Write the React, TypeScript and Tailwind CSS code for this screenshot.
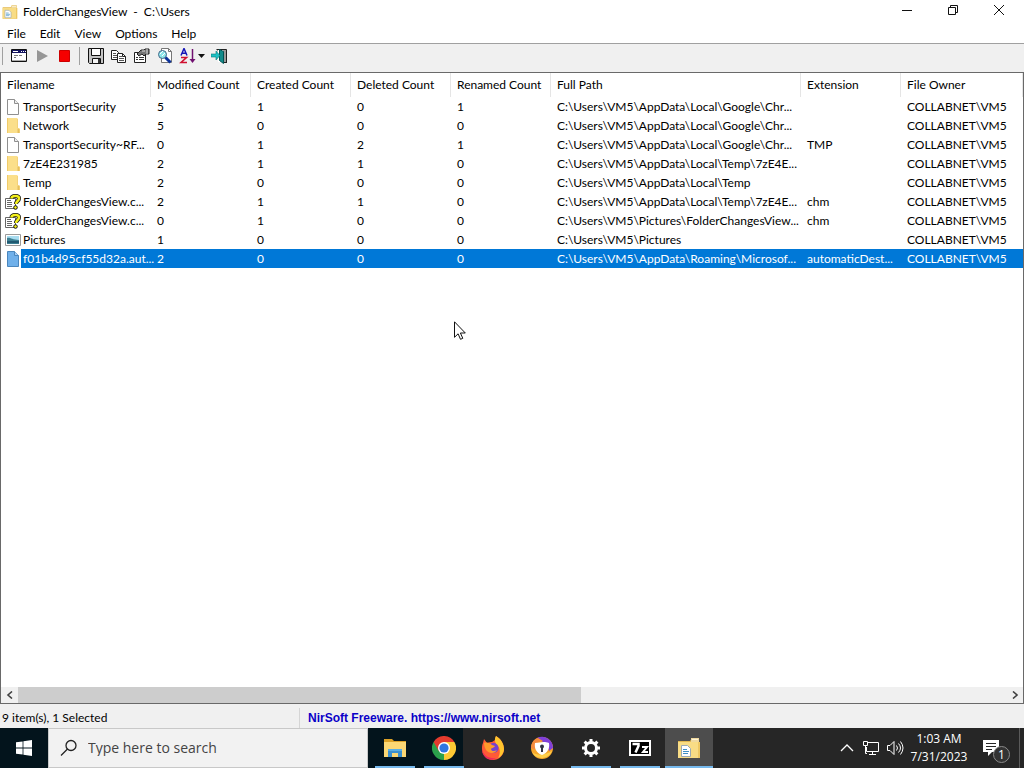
import type { ReactNode } from 'react'
import { clsx } from 'clsx'

type FileKind = 'file' | 'folder' | 'help' | 'picture' | 'selected'

const columns = [
  { label: 'Filename', width: 'w-[150px]' },
  { label: 'Modified Count', width: 'w-[100px]' },
  { label: 'Created Count', width: 'w-[100px]' },
  { label: 'Deleted Count', width: 'w-[100px]' },
  { label: 'Renamed Count', width: 'w-[100px]' },
  { label: 'Full Path', width: 'w-[250px]' },
  { label: 'Extension', width: 'w-[100px]' },
  { label: 'File Owner', width: 'w-auto' },
]

const rows: { kind: FileKind; name: string; counts: number[]; path: string; ext: string }[] = [
  { kind: 'file', name: 'TransportSecurity', counts: [5, 1, 0, 1], path: 'C:\\Users\\VM5\\AppData\\Local\\Google\\Chr...', ext: '' },
  { kind: 'folder', name: 'Network', counts: [5, 0, 0, 0], path: 'C:\\Users\\VM5\\AppData\\Local\\Google\\Chr...', ext: '' },
  { kind: 'file', name: 'TransportSecurity~RF...', counts: [0, 1, 2, 1], path: 'C:\\Users\\VM5\\AppData\\Local\\Google\\Chr...', ext: 'TMP' },
  { kind: 'folder', name: '7zE4E231985', counts: [2, 1, 1, 0], path: 'C:\\Users\\VM5\\AppData\\Local\\Temp\\7zE4E...', ext: '' },
  { kind: 'folder', name: 'Temp', counts: [2, 0, 0, 0], path: 'C:\\Users\\VM5\\AppData\\Local\\Temp', ext: '' },
  { kind: 'help', name: 'FolderChangesView.c...', counts: [2, 1, 1, 0], path: 'C:\\Users\\VM5\\AppData\\Local\\Temp\\7zE4E...', ext: 'chm' },
  { kind: 'help', name: 'FolderChangesView.c...', counts: [0, 1, 0, 0], path: 'C:\\Users\\VM5\\Pictures\\FolderChangesView...', ext: 'chm' },
  { kind: 'picture', name: 'Pictures', counts: [1, 0, 0, 0], path: 'C:\\Users\\VM5\\Pictures', ext: '' },
  { kind: 'selected', name: 'f01b4d95cf55d32a.aut...', counts: [2, 0, 0, 0], path: 'C:\\Users\\VM5\\AppData\\Roaming\\Microsof...', ext: 'automaticDest...' },
]

function AppIcon({ className }: { className: string }) {
  return (
    <svg viewBox="0 0 24 24" className={className}>
      <path d="M1 5h12l2-3h7v20H1z" fill="#e3b94f" />
      <path d="M1 6h21v16H1z" fill="#f8dc85" />
      <path d="M14 2h8v4h-8z" fill="#efd9a0" />
      <path d="M15 3h6v1h-6z" fill="#fff6d8" />
      <path d="M21 6h2v16h-2z" fill="#edc763" />
      <path d="M4.500 9.500h6l3 3v8h-9z" fill="#fff" stroke="#9aa9b5" />
      <path d="M6 13.500h4M6 15.500h6M6 17.500h5" stroke="#3f8fc4" />
    </svg>
  )
}

function FileIcon({ kind }: { kind: FileKind }) {
  if (kind === 'folder') {
    return (
      <svg viewBox="0 0 16 16" className="size-4 shrink-0">
        <path d="M2 0h10l1 1v9l2 1v4H2z" fill="#fbdf8a" />
        <path d="M2 0h1v15H2z" fill="#f0cb6a" />
        <path d="M12.500 10.500h2V15h-2z" fill="#e6bf5e" />
        <path d="M12 1h1v9h-1z" fill="#f3d27a" />
      </svg>
    )
  }
  if (kind === 'help') {
    return (
      <svg viewBox="0 0 16 16" className="size-4 shrink-0">
        <path d="M.5 4.500h10v10H.5z" fill="#fff" stroke="#666" />
        <path d="M2 6.500h4M2 8.500h5M2 10.500h5M2 12.500h5" stroke="#666" />
        <path d="M6.500 4.500C6.500 2.500 8 2 10.500 2S14 3 14 4.500C14 7 11 7 11 10" fill="none" stroke="#111" strokeWidth="4" />
        <circle cx="10.500" cy="13.500" r="1.800" fill="#f4f01c" stroke="#111" />
        <path d="M6.500 4.500C6.500 2.500 8 2 10.500 2S14 3 14 4.500C14 7 11 7 11 10" fill="none" stroke="#f4f01c" strokeWidth="2.500" />
      </svg>
    )
  }
  if (kind === 'picture') {
    return (
      <svg viewBox="0 0 16 16" className="size-4 shrink-0">
        <path d="M.5 2.500h15v11H.5z" fill="#fff" stroke="#9a9a9a" />
        <path d="M2 4h12v8H2z" fill="#a8dcf0" />
        <path d="M2 6c3-1 5 2 12 2v4H2z" fill="#3c7f92" />
        <path d="M2 9h12v2H2z" fill="#225a72" />
      </svg>
    )
  }
  const selected = kind === 'selected'
  return (
    <svg viewBox="0 0 16 16" className="size-4 shrink-0">
      <path
        d="M2.500.5h7l4 4v11h-11z"
        fill={selected ? '#6fb0ea' : '#fff'}
        stroke={selected ? '#4a86bd' : '#8f8f8f'}
      />
      <path d="M9.500.5v4h4" fill={selected ? '#a8d0f5' : '#eee'} stroke={selected ? '#4a86bd' : '#8f8f8f'} />
    </svg>
  )
}

function TitleBar() {
  const controls = [
    { label: 'Minimize', art: <path d="M1 6.500h10" /> },
    { label: 'Restore', art: <path d="M1.500 3.500h7v7h-7zM3.500 3.500v-2h7v7h-2" /> },
    { label: 'Close', art: <path d="M1 1l10 10M11 1L1 11" /> },
  ]
  return (
    <header className="flex h-6 shrink-0 items-center pr-[2px] pl-[2px]">
      <AppIcon className="size-4" />
      <h1 className="ml-[5px] whitespace-pre">FolderChangesView  -  C:\Users</h1>
      <div className="ml-auto flex h-full">
        {controls.map((c) => (
          <button key={c.label} aria-label={c.label} className="flex w-[46px] items-start justify-center pt-1">
            <svg viewBox="0 0 12 12" className="size-3" fill="none" stroke="#111">
              {c.art}
            </svg>
          </button>
        ))}
      </div>
    </header>
  )
}

function MenuBar() {
  return (
    <nav className="flex h-5 shrink-0 items-center border-b border-[#a0a0a0]">
      {['File', 'Edit', 'View', 'Options', 'Help'].map((m) => (
        <button key={m} className="px-[7px] leading-4">
          {m}
        </button>
      ))}
    </nav>
  )
}

function ToolButton({ label, width = 'w-[23px]', box = '0 0 16 16', children }: { label: string; width?: string; box?: string; children: ReactNode }) {
  return (
    <button aria-label={label} className={clsx('flex h-full items-center justify-center', width)}>
      <svg viewBox={box} className={box === '0 0 16 16' ? 'size-4' : 'h-4 w-[26px]'} fill="none">
        {children}
      </svg>
    </button>
  )
}

function Toolbar() {
  return (
    <div role="toolbar" className="flex h-7 shrink-0 items-center bg-[#f0f0f0] pb-1 pl-[2px]">
      <span className="h-[18px] w-px bg-[#a0a0a0]" />
      <span className="w-1" />
      <ToolButton label="Choose folder">
        <path d="M.5 1.500h15v12H.5z" fill="#fff" stroke="#111" />
        <path d="M1 2h14v3H1z" fill="#151560" />
        <path d="M2 3.500h5M10 3.500h1M12 3.500h1M14 3.500h1" stroke="#fff" />
        <path d="M3 7.500h4M8 7.500h3M3 9.500h2" stroke="#777" />
        <path d="M1 12.500h14" stroke="#aaa" />
      </ToolButton>
      <ToolButton label="Start">
        <path d="M3 2l11 6L3 14z" fill="#969696" />
      </ToolButton>
      <ToolButton label="Stop">
        <path d="M2.500 2.500h10v11h-10z" fill="#f60000" stroke="#c00" />
      </ToolButton>
      <span className="w-[3px]" />
      <span className="h-[18px] w-px bg-[#a0a0a0]" />
      <span className="w-[4px]" />
      <ToolButton label="Save">
        <path d="M.5.5h15v15h-14l-1-1z" fill="#c4c4c4" stroke="#111" />
        <path d="M3.500.5h9v7h-9z" fill="#fff" stroke="#111" />
        <path d="M4.500 10.500h8v5h-8z" fill="#f4f4f4" stroke="#111" />
        <path d="M10 11h2v4h-2z" fill="#333" />
      </ToolButton>
      <ToolButton label="Copy">
        <path d="M.5 2.500h5l2 2v7h-7z" fill="#fff" stroke="#222" />
        <path d="M2 5.500h3M2 7.500h4M2 9.500h4" stroke="#555" />
        <path d="M6.500 5.500h5l3 3v6h-8z" fill="#fff" stroke="#222" />
        <path d="M8 8.500h3M8 10.500h5M8 12.500h5" stroke="#555" />
        <path d="M11.500 5.500v3h3" stroke="#222" />
      </ToolButton>
      <ToolButton label="Properties">
        <path d="M.5 4.500h11v10H.5z" fill="#fff" stroke="#222" />
        <path d="M2 9.500h2M5 9.500h5M2 11.500h2M5 11.500h5" stroke="#333" />
        <path d="M3 6l4-4h3l1-1h4v5h-3l-2 2-2-2-3 2z" fill="#777" stroke="#222" />
        <path d="M8 3h3M13 1v5" stroke="#ddd" />
      </ToolButton>
      <ToolButton label="Find">
        <path d="M4.500.5h7l3 3v11h-10z" fill="#fff" stroke="#777" />
        <path d="M11.500.5v3h3" stroke="#777" />
        <circle cx="5.500" cy="6.500" r="4" fill="#8ee6ea" stroke="#468" />
        <path d="M3 6l3-3M5 8l3-3" stroke="#fff" />
        <path d="M8.500 9.500l5 5" stroke="#0c329a" strokeWidth="3" />
      </ToolButton>
      <ToolButton label="Sort" width="w-[31px]" box="0 0 26 16">
        <path d="M2 7.500l3-7 3 7M3 5.200h4" stroke="#1616b8" strokeWidth="1.500" />
        <path d="M2 9.500h5.500l-5.500 5h6" stroke="#d01030" strokeWidth="1.600" />
        <path d="M13.500 1v12" stroke="#701070" strokeWidth="1.500" />
        <path d="M10.500 11h6l-3 4z" fill="#701070" />
        <path d="M19 6h7l-3.500 4z" fill="#111" />
      </ToolButton>
      <ToolButton label="Exit">
        <path d="M5.500 1.500h10v13h-3" fill="#9a9a9a" stroke="#222" />
        <path d="M7 2h5v12H7z" fill="#fff" />
        <path d="M8.500 1.500l4 2v12l-4-3z" fill="#128c8c" stroke="#055" />
        <path d="M14.500 14.500h2" stroke="#222" />
        <path d="M0 6h5V3l4 4.500L5 12V9H0z" fill="#1cc0c4" stroke="#067878" strokeWidth=".6" />
      </ToolButton>
    </div>
  )
}

function FileList() {
  return (
    <main className="flex min-h-0 flex-1 flex-col border border-[#696969] bg-white">
      <div className="min-h-0 flex-1 overflow-hidden">
        <table className="w-full table-fixed border-separate border-spacing-0 text-left">
          <thead>
            <tr className="h-6">
              {columns.map((c) => (
                <th key={c.label} className={clsx('border-r border-[#e5e5e5] p-0 pl-[6px] font-normal whitespace-nowrap', c.width)}>
                  {c.label}
                </th>
              ))}
            </tr>
          </thead>
          <tbody>
            {rows.map((r, i) => {
              const highlight = r.kind === 'selected' && 'bg-[#0078d7] text-white'
              const cell = clsx('p-0 pl-[6px] whitespace-nowrap', highlight)
              return (
                <tr key={i} className="h-[19px]">
                  <td className="p-0 pl-1">
                    <div className="flex h-[19px] items-center">
                      <FileIcon kind={r.kind} />
                      <span className={clsx('relative flex h-full min-w-0 flex-1 items-center pl-[2px] whitespace-nowrap', highlight)}>
                        {r.name}
                      </span>
                    </div>
                  </td>
                  {r.counts.map((n, j) => (
                    <td key={j} className={cell}>{n}</td>
                  ))}
                  <td className={cell}>{r.path}</td>
                  <td className={cell}>{r.ext}</td>
                  <td className={cell}>COLLABNET\VM5</td>
                </tr>
              )
            })}
          </tbody>
        </table>
      </div>
      {/* Horizontal scrollbar */}
      <div className="flex h-4 shrink-0 bg-[#f0f0f0]">
        <button aria-label="Scroll left" className="flex w-[17px] items-center justify-center">
          <svg viewBox="0 0 8 8" className="size-2" fill="none" stroke="#404040" strokeWidth="1.600">
            <path d="M6 .5L2 4l4 3.500" />
          </svg>
        </button>
        <div className="flex-1">
          <div className="h-full w-[57%] bg-[#cdcdcd]" />
        </div>
        <button aria-label="Scroll right" className="flex w-[17px] items-center justify-center">
          <svg viewBox="0 0 8 8" className="size-2" fill="none" stroke="#404040" strokeWidth="1.600">
            <path d="M2 .5L6 4 2 7.500" />
          </svg>
        </button>
      </div>
    </main>
  )
}

function StatusBar() {
  return (
    <footer className="flex h-6 shrink-0 items-center bg-[#f0f0f0] pt-1">
      <span className="flex h-full w-[300px] items-center border-r border-[#d5d5d5] pl-[2px]">9 item(s), 1 Selected</span>
      <a href="https://www.nirsoft.net" className="pl-2 font-['Liberation_Sans',sans-serif] font-bold text-[#0a00c8]">
        NirSoft Freeware. https://www.nirsoft.net
      </a>
    </footer>
  )
}

const taskbarApps: { label: string; state: 'idle' | 'running' | 'active'; art: ReactNode }[] = [
  {
    label: 'File Explorer',
    state: 'running',
    art: (
      <>
        <path d="M1 3h8l2 2h12v5H1z" fill="#dca127" />
        <path d="M1 6h22v15H1z" fill="#fbd774" />
        <path d="M5 21v-7l2-1h10l2 1v7h-4v-4H9v4z" fill="#3b8fce" />
        <path d="M5 13h14v2H5z" fill="#59aee4" />
      </>
    ),
  },
  {
    label: 'Google Chrome',
    state: 'running',
    art: (
      <>
        <path d="M12 12L1.600 6A12 12 0 0 1 22.400 6z" fill="#e33b2e" />
        <path d="M12 12L22.400 6A12 12 0 0 1 12 24z" fill="#fcc934" />
        <path d="M12 12v12A12 12 0 0 1 1.600 6z" fill="#2ba14b" />
        <path d="M12 6h10.400L17.200 15z" fill="#fcc934" />
        <path d="M6.800 15L1.600 6 12 6z" fill="#e33b2e" />
        <path d="M6.800 15l5.200 3L12 24z" fill="#2ba14b" />
        <circle cx="12" cy="12" r="6" fill="#fff" />
        <circle cx="12" cy="12" r="4.600" fill="#2f76e0" />
      </>
    ),
  },
  {
    label: 'Firefox',
    state: 'idle',
    art: (
      <>
        <path d="M2 7l1-4 3 4c2-1 4-1 5-1l3-2 1-4c5 3 8 8 8 13a11 11 0 0 1-22 0c0-2 0-4 1-6z" fill="#ff5a36" />
        <path d="M15 0c5 3 8 8 8 13 0 4-3 8-6 9 3-5 2-10-1-13-2-2-3-6-1-9z" fill="#ffc52e" />
        <path d="M1 13c1 7 8 10 14 9-3 3-8 2-11-1-2-2-3-5-3-8z" fill="#ee2a5c" />
        <circle cx="12.500" cy="12" r="5" fill="#7542d0" />
        <path d="M3 7c3-1 6 0 8 2l3 1c-1 2-4 2-4 3 0 2 3 3 6 1-2 4-8 4-11 0-1-2-2-4-2-7z" fill="#ff9a2b" />
      </>
    ),
  },
  {
    label: 'Private Browser',
    state: 'idle',
    art: (
      <>
        <circle cx="12" cy="12" r="11" fill="#f8a72b" />
        <path d="M7 2a11 11 0 0 1 16 10l-4 3c0-6-6-9-12-13z" fill="#8040d8" />
        <path d="M1 12C1 7 4 3 8 2l5 3c-5 0-8 4-8 9z" fill="#f58a3c" />
        <path d="M2 16c5 4 14 3 20-1a11 11 0 0 1-20 1z" fill="#ffd04a" />
        <path d="M5 7c5 0 8-2 14 0 1 6-2 10-7 12C7 17 4 13 5 7z" fill="#fff" />
        <circle cx="12" cy="10.500" r="2" fill="#334" />
        <path d="M11 11h2v5h-2z" fill="#334" />
      </>
    ),
  },
  {
    label: 'Settings',
    state: 'running',
    art: (
      <>
        <circle cx="12" cy="12" r="5.500" fill="none" stroke="#fff" strokeWidth="3" />
        <path
          d="M12 3v3M12 18v3M3 12h3M18 12h3M5.600 5.600l2.200 2.200M16.200 16.200l2.200 2.200M18.400 5.600l-2.200 2.200M7.800 16.200l-2.200 2.200"
          stroke="#fff"
          strokeWidth="3"
        />
      </>
    ),
  },
  {
    label: '7-Zip',
    state: 'running',
    art: (
      <>
        <path d="M1 4h22v16H1z" fill="#fff" />
        <path d="M3 6h18v12H3z" fill="#000" />
        <path d="M4.500 8h6v2l-3 6.500" fill="none" stroke="#fff" strokeWidth="2.500" />
        <path d="M14 11h5l-4 5h5" fill="none" stroke="#fff" strokeWidth="2" />
      </>
    ),
  },
  { label: 'FolderChangesView', state: 'active', art: null },
]

function Taskbar() {
  return (
    <div className="flex h-10 shrink-0 bg-[linear-gradient(to_right,#03141c_463px,#262626_463px)] font-['Open_Sans',sans-serif] text-white">
      <button aria-label="Start menu" className="flex w-12 items-center justify-center">
        <svg viewBox="0 0 16 16" className="size-4" fill="#fff">
          <path d="M0 2.300L6.600 1.400v6.200H0zM7.400 1.300L16 0v7.600H7.400zM0 8.400h6.600v6.200L0 13.700zM7.400 8.400H16V16l-8.600-1.200z" />
        </svg>
      </button>
      <label className="flex w-80 items-center border border-[#c8c8c8] bg-[#f2f2f2] pl-[11px] text-[#444]">
        <svg viewBox="0 0 18 18" className="size-[18px]" fill="none" stroke="#222" strokeWidth="1.300">
          <circle cx="11" cy="6.500" r="5" />
          <path d="M7.500 10L1 16.500" />
        </svg>
        <input
          aria-label="Search"
          placeholder="Type here to search"
          className="ml-[10px] min-w-0 flex-1 bg-transparent text-[14px] outline-none placeholder:text-[#444]"
        />
      </label>
      <div className="ml-[3px] flex gap-px">
        {taskbarApps.map((app) => (
          <button
            key={app.label}
            aria-label={app.label}
            className={clsx('flex w-12 flex-col items-center', app.state === 'active' && 'bg-[#4d4d4d]')}
          >
            <span className="flex flex-1 items-center pt-[2px]">
              {app.art ? (
                <svg viewBox="0 0 24 24" className="size-6">
                  {app.art}
                </svg>
              ) : (
                <AppIcon className="size-6" />
              )}
            </span>
            <span
              className={clsx(
                'h-[2px]',
                app.state === 'active' ? 'w-full' : 'w-10',
                app.state === 'idle' ? 'bg-transparent' : 'bg-[#76b9ed]',
              )}
            />
          </button>
        ))}
      </div>
      <div className="ml-auto flex items-center">
        <button aria-label="Show hidden icons" className="w-6">
          <svg viewBox="0 0 14 8" className="mx-auto h-2 w-[14px]" fill="none" stroke="#fff" strokeWidth="1.300">
            <path d="M1 7l6-6 6 6" />
          </svg>
        </button>
        <button aria-label="Network" className="w-6">
          <svg viewBox="0 0 18 16" className="mx-auto h-4 w-[18px]" fill="none" stroke="#fff">
            <path d="M5 2.500h11.500v9h-12V7M10.500 11.500v3M7 14.500h7" />
            <path d="M1.500 1.500h4v4h-4zM3.500 5.500v8H5" />
          </svg>
        </button>
        <button aria-label="Volume" className="w-6">
          <svg viewBox="0 0 18 16" className="mx-auto h-4 w-[18px]" fill="none" stroke="#fff">
            <path d="M1.500 5.500h2.500l4-4v13l-4-4H1.500zM10.500 5.500q2 2.500 0 5M12.500 3.500q4 4.500 0 9M14.500 1.500q5 6.500 0 13" />
          </svg>
        </button>
        <div className="w-16 text-center leading-[18px]">
          <div>1:03 AM</div>
          <div>7/31/2023</div>
        </div>
        <button aria-label="1 new notification" className="relative h-full w-12">
          <svg viewBox="0 0 18 18" className="ml-3 size-[18px]">
            <path d="M0 1h16v12H9l-4 4v-4H0z" fill="#fff" />
            <path d="M3 4.500h10M3 7.500h10M3 10.500h6" stroke="#262626" />
          </svg>
          <span className="absolute right-[9px] bottom-[5px] flex size-[17px] items-center justify-center rounded-full border border-[#8a8a8a] bg-[#333] text-[12px]">
            1
          </span>
        </button>
        <span className="mr-1 h-full w-px bg-[#5a5a5a]" />
      </div>
    </div>
  )
}

export default function App() {
  return (
    <div className="relative flex h-screen flex-col overflow-hidden bg-white font-['Lato',sans-serif] text-[12px] leading-4 text-black">
      <TitleBar />
      <MenuBar />
      <Toolbar />
      <FileList />
      <StatusBar />
      <Taskbar />
      {/* Mouse pointer */}
      <svg viewBox="0 0 12 19" className="pointer-events-none absolute top-[321px] left-[454px] h-[19px] w-3">
        <path d="M.5.8v15.500l3.600-3.500 2.400 5.500 2.300-1-2.400-5.300h4.900z" fill="#fff" stroke="#111" />
      </svg>
    </div>
  )
}
